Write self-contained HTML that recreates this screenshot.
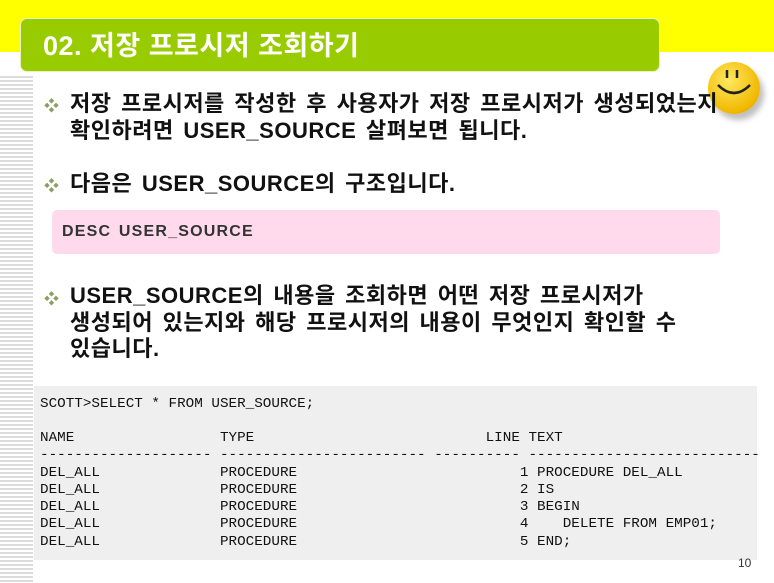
<!DOCTYPE html>
<html><head><meta charset="utf-8"><style>
body{margin:0;width:774px;height:583px;background:#fff;position:relative;overflow:hidden;font-family:"Liberation Sans","Noto Sans CJK KR",sans-serif}
.yb{position:absolute;left:0;top:0;width:774px;height:52px;background:#ffff00}
.stripes{position:absolute;left:0;top:74px;width:33px;height:509px;background:repeating-linear-gradient(#fff 0 2px,#dcdcdc 2px 4px)}
.title{position:absolute;left:20px;top:18px;width:640px;height:54px;background:#99cc00;border-radius:7px;border:1px solid #e8f4c0;box-sizing:border-box;color:#fff;font-weight:bold;font-size:27px;line-height:54px;padding-left:22px;letter-spacing:0.5px}
.t{position:absolute;left:70px;font-weight:bold;font-size:22px;color:#111;line-height:27px;white-space:nowrap;letter-spacing:0.5px;word-spacing:3px}
.b{position:absolute;left:44px;color:#8aa060;font-size:15px}
.pink{position:absolute;left:52px;top:210px;width:668px;height:44px;background:#ffd9ec;border-radius:5px;font-weight:bold;color:#333;font-size:16px;line-height:44px;padding-left:10px;box-sizing:border-box;letter-spacing:1.2px;word-spacing:2px}
.code{position:absolute;left:34px;top:386px;width:723px;height:174px;background:#efefef}
pre{position:absolute;left:40px;margin:0;font-family:"Liberation Mono",monospace;font-size:14px;line-height:17.3px;color:#111;transform:scaleX(1.02);transform-origin:0 0}
.smile{position:absolute;left:708px;top:62px;width:52px;height:52px;border-radius:50%;background:radial-gradient(circle at 40% 35%,#ffe860,#f0b800 70%,#c88a00);box-shadow:4px 6px 6px rgba(0,0,0,.25)}
</style></head><body>
<div class="yb"></div>
<div class="stripes"></div>
<div class="title">02. 저장 프로시저 조회하기</div>
<div class="smile"><svg width="52" height="52"><path d="M19 8v8M29 8v8" stroke="#222" stroke-width="2.5"/><path d="M10 23q16 16 32 0" stroke="#222" stroke-width="2.5" fill="none"/></svg></div>
<div class="b" style="top:95px">❖</div>
<div class="t" style="top:90px">저장 프로시저를 작성한 후 사용자가 저장 프로시저가 생성되었는지<br>확인하려면 USER_SOURCE 살펴보면 됩니다.</div>
<div class="b" style="top:175px">❖</div>
<div class="t" style="top:170px">다음은 USER_SOURCE의 구조입니다.</div>
<div class="pink">DESC USER_SOURCE</div>
<div class="b" style="top:288px">❖</div>
<div class="t" style="top:283px;line-height:26.5px">USER_SOURCE의 내용을 조회하면 어떤 저장 프로시저가<br>생성되어 있는지와 해당 프로시저의 내용이 무엇인지 확인할 수<br>있습니다.</div>
<div class="code"></div>
<pre style="top:396px">SCOTT&gt;SELECT * FROM USER_SOURCE;</pre>
<pre style="top:430px">NAME                 TYPE                           LINE TEXT
-------------------- ------------------------ ---------- ---------------------------
DEL_ALL              PROCEDURE                          1 PROCEDURE DEL_ALL
DEL_ALL              PROCEDURE                          2 IS
DEL_ALL              PROCEDURE                          3 BEGIN
DEL_ALL              PROCEDURE                          4    DELETE FROM EMP01;
DEL_ALL              PROCEDURE                          5 END;</pre>
<div style="position:absolute;left:738px;top:556px;font-size:12px;color:#333">10</div>
</body></html>
